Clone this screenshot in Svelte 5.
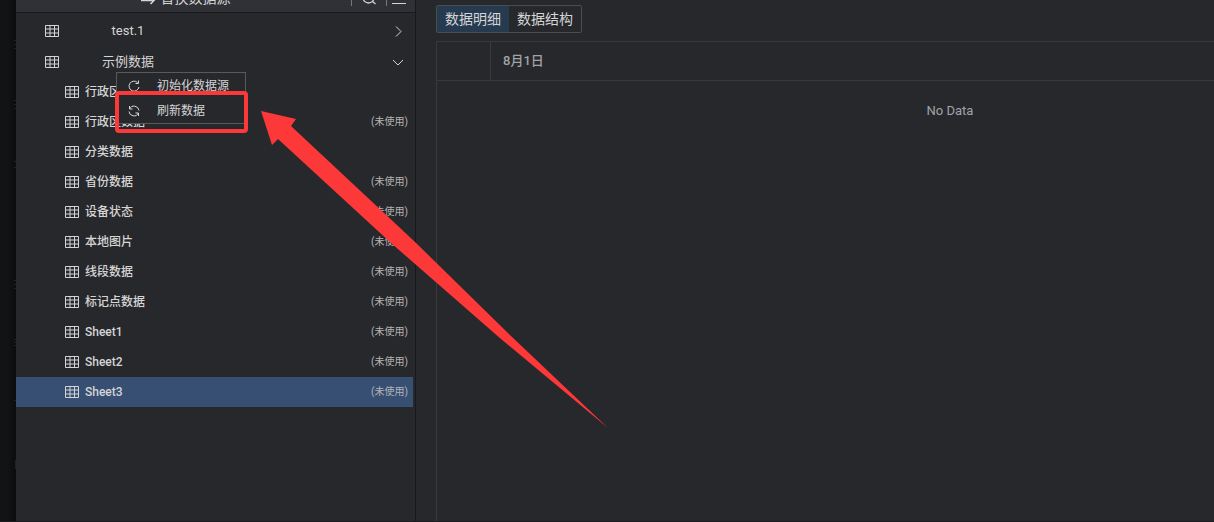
<script>
  let sources = [
    { name: 'test.1', open: false },
    { name: '示例数据', open: true }
  ]

  let tables = [
    { name: '行政区数据', used: true },
    { name: '行政区数据', used: false },
    { name: '分类数据', used: true },
    { name: '省份数据', used: false },
    { name: '设备状态', used: false },
    { name: '本地图片', used: false },
    { name: '线段数据', used: false },
    { name: '标记点数据', used: false },
    { name: 'Sheet1', used: false },
    { name: 'Sheet2', used: false },
    { name: 'Sheet3', used: false }
  ]

  let selected = 10
  let tab = 0
  let tabs = ['数据明细', '数据结构']

  function toggle(i) {
    sources[i].open = !sources[i].open
  }
</script>

{#snippet grid()}
  <svg class="grid-icon" width="14" height="12" viewBox="0 0 14 12" fill="none" stroke="currentColor" aria-hidden="true">
    <path d="M0.5 0.5H13.5V11.5H0.5ZM0 4H14M0 8H14M5 0V12M9.5 0V12" />
  </svg>
{/snippet}

<div class="page">
  <div class="rail">
    <svg width="2" height="522" viewBox="0 0 2 522" stroke="#16252f" aria-hidden="true">
      <path d="M0 40.5H2M0 44.5H2M0 48.5H2M0 100.5H2M0 104.5H2M0 108.5H2M0 161.5H2M0 167.5H2M0 280.5H2M0 284.5H2M0 288.5H2M0 339.5H2M0 342.5H2M0 345.5H2M0 400.5H2M1.5 460V469" />
    </svg>
  </div>

  <aside class="panel">
    <header>
      <button class="swap">
        <svg width="14" height="14" viewBox="0 0 14 14" fill="none" stroke="currentColor" stroke-width="1.5" aria-hidden="true">
          <path d="M12 4H1L4.500 1M0 9.500H13L9.500 13" />
        </svg>
        替换数据源
      </button>
      <div class="tools">
        <button aria-label="搜索">
          <svg width="14" height="14" viewBox="0 0 14 14" fill="none" stroke="currentColor" stroke-width="1.300" aria-hidden="true">
            <circle cx="6.500" cy="6.500" r="5.500" />
            <path d="M10.500 10.500L13.500 13" />
          </svg>
        </button>
        <button aria-label="菜单">
          <svg width="14" height="14" viewBox="0 0 14 14" fill="none" stroke="currentColor" aria-hidden="true">
            <path d="M0 2.500H14M0 7.500H14M0 12.500H14" />
          </svg>
        </button>
      </div>
    </header>

    <div class="list">
      {#each sources as source, i}
        <button class="source" on:click={() => toggle(i)}>
          {@render grid()}
          <span class="source-name">{source.name}</span>
          <svg class="chevron" width="12" height="12" viewBox="0 0 12 12" fill="none" stroke="currentColor" aria-hidden="true">
            {#if source.open}
              <path d="M1 4L6 9L11 4" />
            {:else}
              <path d="M4 1.500L9 6.500L4 11.500" />
            {/if}
          </svg>
        </button>
      {/each}

      {#if sources[1].open}
        {#each tables as table, i}
          <button class="row" class:selected={selected === i} on:click={() => (selected = i)}>
            {@render grid()}
            <span>{table.name}</span>
            {#if !table.used}
              <small>(未使用)</small>
            {/if}
          </button>
        {/each}
      {/if}
    </div>
  </aside>

  <main>
    <div class="tabs">
      {#each tabs as label, i}
        <button class:active={tab === i} on:click={() => (tab = i)}>{label}</button>
      {/each}
    </div>
    <div class="table-box">
      <table>
        <thead>
          <tr><th class="index"></th><th>8月1日</th></tr>
        </thead>
        <tbody>
          <tr><td colspan="2">No Data</td></tr>
        </tbody>
      </table>
    </div>
  </main>

  <div class="menu">
    <button>
      <svg width="12" height="12" viewBox="0 0 12 12" fill="none" stroke="currentColor" aria-hidden="true">
        <path d="M9.500 2.500A5 5 0 1 0 11 7M10.500 0.500V3.500H7.500" />
      </svg>
      初始化数据源
    </button>
    <button>
      <svg width="12" height="12" viewBox="0 0 12 12" fill="none" stroke="currentColor" aria-hidden="true">
        <path d="M1.500 4A5 5 0 0 1 11 5.500M1.500 1V4H4.500M10.500 8A5 5 0 0 1 1 6.500M10.500 11V8H7.500" />
      </svg>
      刷新数据
    </button>
  </div>

  <div class="highlight"></div>
  <svg class="arrow" width="348" height="318" viewBox="0 0 348 318" aria-hidden="true">
    <path d="M0 0L35 8L30 15L153 130L250 225L347 317L240 228L130 132L17 28L11 34Z" fill="#fd3838" />
  </svg>
</div>

<style>
  :global(body) {
    margin: 0;
    background: #27282c;
  }

  .page {
    position: relative;
    display: flex;
    box-sizing: border-box;
    height: 100vh;
    overflow: hidden;
    border-bottom: 1px solid #1d1c20;
    color: #d5d5d5;
    font: 12px/16px Roboto, "Noto Sans CJK SC", sans-serif;
  }

  button {
    padding: 0;
    border: 0;
    background: none;
    color: inherit;
    font: inherit;
    cursor: pointer;
  }

  svg {
    flex: none;
  }

  .rail {
    display: flex;
    justify-content: flex-end;
    flex: none;
    width: 16px;
    background: linear-gradient(90deg, #101214, #121315 50%, #0c0c0d);
  }

  .panel {
    flex: none;
    width: 399px;
    border-right: 1px solid #18191b;
  }

  header {
    position: relative;
    display: flex;
    align-items: flex-end;
    justify-content: center;
    height: 12px;
    overflow: hidden;
    border-bottom: 1px solid #18191b;
    background: #303136;
  }

  .swap {
    display: flex;
    align-items: center;
    gap: 6px;
    margin-right: 60px;
    padding-bottom: 3px;
    font-size: 14px;
    line-height: 22px;
    white-space: nowrap;
  }

  .tools {
    position: absolute;
    right: 0;
    bottom: 6px;
    display: flex;
  }

  .tools button {
    display: flex;
    justify-content: center;
    width: 35px;
    padding-bottom: 1px;
    border-left: 1px solid #77787b;
  }

  .tools button:last-child {
    width: 29px;
    padding-right: 5px;
  }

  .list {
    padding: 2px 2px 0 0;
  }

  .source,
  .row {
    display: flex;
    align-items: center;
    width: 100%;
    text-align: left;
  }

  .source {
    height: 31px;
    padding: 0 9px 0 29px;
    font-size: 13px;
  }

  .source-name {
    width: 138px;
    text-align: center;
  }

  .chevron {
    margin-left: auto;
  }

  .row {
    height: 30px;
    gap: 6px;
    padding: 0 5px 0 49px;
    font-weight: 500;
  }

  .row.selected {
    background: #374f73;
  }

  .row small {
    margin-left: auto;
    color: #b4b4b4;
    font-size: 10px;
    font-weight: 400;
  }

  main {
    flex: 1;
    display: flex;
    flex-direction: column;
    align-items: flex-start;
    gap: 8px;
    min-width: 0;
    padding: 5px 0 0 20px;
  }

  .tabs {
    display: flex;
    border: 1px solid #4b4c50;
    border-radius: 2px;
  }

  .tabs button {
    padding: 0 8px;
    font-size: 14px;
    line-height: 26px;
  }

  .tabs .active {
    background: #263a50;
  }

  .table-box {
    flex: 1;
    box-sizing: border-box;
    width: 100%;
    overflow: hidden;
    border: solid #39393a;
    border-width: 1px 0 0 1px;
  }

  table {
    width: 100%;
    min-width: 1026px;
    table-layout: fixed;
    border-collapse: separate;
    border-spacing: 0;
    color: #a2a3a8;
    font-size: 13px;
  }

  th {
    height: 38px;
    padding: 0 12px;
    border-bottom: 1px solid #39393a;
    text-align: left;
    font-weight: 500;
  }

  .index {
    width: 29px;
    border-right: 1px solid #39393a;
  }

  td {
    height: 60px;
    padding: 0;
    text-align: center;
  }

  /* context menu floats over the list */
  .menu {
    position: absolute;
    left: 116px;
    top: 72px;
    width: 128px;
    border: 1px solid #58595c;
    background: #27282c;
  }

  .menu button {
    display: flex;
    align-items: center;
    gap: 17px;
    width: 100%;
    height: 25px;
    padding-left: 11px;
    white-space: nowrap;
  }

  .highlight {
    position: absolute;
    left: 115px;
    top: 91px;
    width: 125px;
    height: 34px;
    border: 4px solid #fd3838;
    border-radius: 4px;
    pointer-events: none;
  }

  .arrow {
    position: absolute;
    left: 261px;
    top: 111px;
    pointer-events: none;
  }
</style>
